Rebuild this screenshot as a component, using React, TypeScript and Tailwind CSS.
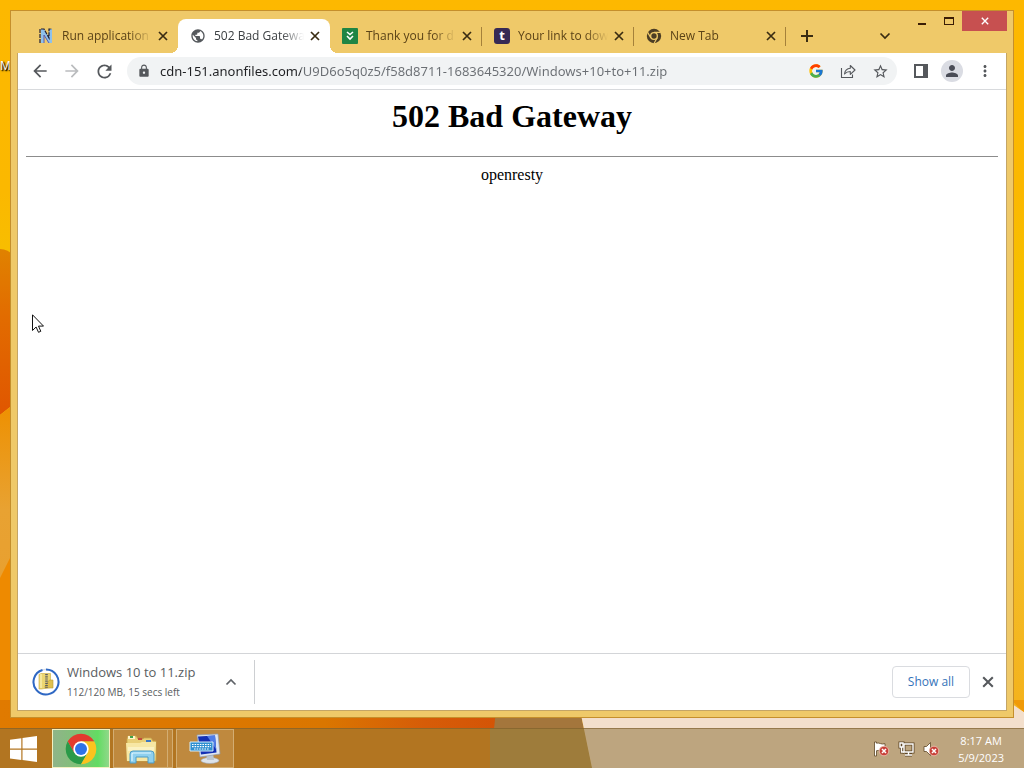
import React from "react";
import {
  MdArrowBack,
  MdArrowForward,
  MdRefresh,
  MdLock,
  MdStarBorder,
  MdPerson,
  MdMoreVert,
  MdPublic,
} from "react-icons/md";
import { FcGoogle } from "react-icons/fc";

function Wallpaper() {
  return (
    <svg
      className="absolute inset-0 h-full w-full"
      viewBox="0 0 1024 768"
      preserveAspectRatio="none"
      aria-hidden="true"
    >
      <defs>
        <linearGradient id="wpSide" x1="0" y1="0" x2="0" y2="1">
          <stop offset="0" stopColor="#fdb800" />
          <stop offset="0.25" stopColor="#fbb800" />
          <stop offset="0.42" stopColor="#f4c400" />
          <stop offset="0.6" stopColor="#f3c22c" />
          <stop offset="0.93" stopColor="#f4b21c" />
        </linearGradient>
        <linearGradient id="wpPetal" x1="0" y1="0" x2="0" y2="1">
          <stop offset="0" stopColor="#e08200" />
          <stop offset="0.4" stopColor="#e26c00" />
          <stop offset="1" stopColor="#e05600" />
        </linearGradient>
        <linearGradient id="wpLow" x1="0" y1="0" x2="0" y2="1">
          <stop offset="0" stopColor="#ee9000" />
          <stop offset="0.6" stopColor="#e8a232" />
          <stop offset="1" stopColor="#e8a030" />
        </linearGradient>
        <linearGradient id="wpBottom" x1="0" y1="0" x2="1" y2="0">
          <stop offset="0" stopColor="#e07a00" />
          <stop offset="0.65" stopColor="#da7600" />
          <stop offset="0.85" stopColor="#d65c08" />
          <stop offset="1" stopColor="#d45406" />
        </linearGradient>
      </defs>
      <rect width="1024" height="768" fill="url(#wpSide)" />
      <path d="M0 249 Q8 249 14 256 V404 L0 415Z" fill="url(#wpPetal)" />
      <path d="M0 415 L14 404 V560 L0 580Z" fill="url(#wpLow)" />
      <path d="M0 578 L14 550 V712 H0Z" fill="#ee8a00" />
      <path d="M0 700 H500 V768 H0Z" fill="url(#wpBottom)" />
      <path d="M0 728 H490 V768 H0Z" fill="#dc7e10" />
      <path d="M497 700 H578 L592 768 H490Z" fill="#a4763c" />
      <path d="M490 728 H584 L592 768 H490Z" fill="#b58c44" />
      <path d="M578 700 H1006 L1024 712 V768 H592Z" fill="#f3dfcc" />
      <path d="M1006 700 H1024 V712 Q1018 708 1012 700Z" fill="#f09a08" />
    </svg>
  );
}

function ChromeLogo({ className }: { className: string }) {
  return (
    <svg viewBox="0 0 48 48" className={className} aria-hidden="true">
      <path d="M4.1 12.5 A23 23 0 0 0 24 47 L34 29.8 L24 24 L14 29.8Z" fill="#2a9a48" />
      <path d="M43.9 12.5 A23 23 0 0 1 24 47 L34 29.8 L24 12.5Z" fill="#fcc31e" />
      <path d="M4.1 12.5 L14 29.8 L24 24 L24 12.5 H43.9 A23 23 0 0 0 4.1 12.5Z" fill="#e33b2e" />
      <circle cx="24" cy="24" r="11.5" fill="#fff" />
      <circle cx="24" cy="24" r="9" fill="#2f73e8" />
    </svg>
  );
}

function ChromeMonoIcon() {
  return (
    <svg viewBox="0 0 48 48" className="h-4 w-4" aria-hidden="true">
      <circle cx="24" cy="24" r="21.5" fill="#4c3d24" />
      <path d="M24 13H44M14.500 29.500L4.500 12.500M33.500 29.500L23.500 47" stroke="#efc969" strokeWidth="3.500" />
      <circle cx="24" cy="24" r="12" fill="#efc969" />
      <circle cx="24" cy="24" r="8" fill="#4c3d24" />
    </svg>
  );
}

function CrossIcon({ className }: { className: string }) {
  return (
    <svg viewBox="0 0 10 10" className={className} aria-hidden="true">
      <path d="M1 1l8 8M9 1L1 9" fill="none" stroke="currentColor" strokeWidth="1.7" />
    </svg>
  );
}

function NewsIcon() {
  return (
    <svg viewBox="0 0 16 16" className="h-4 w-4" aria-hidden="true">
      <path d="M3 1h3l5 8V1h3v14h-4L6 7v8H3z" fill="#8fc1ea" />
      <path d="M2 15V1h4l5 9V1h3" fill="none" stroke="#1d1d33" strokeWidth="1.2" strokeDasharray="4 1" />
      <path d="M6 7v8M6 7l5 8" fill="none" stroke="#5d5aa8" strokeWidth="1" />
    </svg>
  );
}

function AnonIcon() {
  return (
    <svg viewBox="0 0 16 16" className="h-4 w-4" aria-hidden="true">
      <rect width="16" height="16" rx="1" fill="#1f8544" />
      <path d="M5 4l3 2.5L11 4M5 8l3 3 3-3" fill="none" stroke="#fff" strokeWidth="1.6" />
    </svg>
  );
}

function LetterIcon() {
  return (
    <span className="flex h-4 w-4 items-center justify-center rounded-[3px] bg-[#372a55] pb-0.5 text-[13px] leading-none font-bold text-white">
      t
    </span>
  );
}

type TabInfo = { title: string; icon: React.ReactNode; active?: boolean; line?: boolean };

const tabs: TabInfo[] = [
  { title: "Run application", icon: <NewsIcon /> },
  { title: "502 Bad Gatewa", icon: <MdPublic className="h-4 w-4 text-[#55595d]" />, active: true },
  { title: "Thank you for d", icon: <AnonIcon />, line: true },
  { title: "Your link to dow", icon: <LetterIcon />, line: true },
  { title: "New Tab", icon: <ChromeMonoIcon />, line: true },
];

function Tab({ title, icon, active, line }: TabInfo) {
  return (
    <div
      className={
        active
          ? "relative flex h-[34px] w-[152px] min-w-0 items-center rounded-t-lg bg-white pr-2.5 pl-3 text-[#3c4043]"
          : "relative flex h-[34px] w-[152px] min-w-0 items-center pr-2.5 pl-3 text-[#5b4317]"
      }
    >
      {active && (
        <>
          <span className="absolute bottom-0 -left-2 h-2 w-2 bg-[radial-gradient(circle_at_0_0,transparent_8px,#fff_8px)]" />
          <span className="absolute -right-2 bottom-0 h-2 w-2 bg-[radial-gradient(circle_at_100%_0,transparent_8px,#fff_8px)]" />
        </>
      )}
      <button type="button" className="flex min-w-0 flex-1 items-center gap-2 text-left">
        <span className="shrink-0">{icon}</span>
        <span className="min-w-0 flex-1 overflow-hidden text-xs whitespace-nowrap [mask-image:linear-gradient(to_right,#000_75%,transparent)]">
          {title}
        </span>
      </button>
      <button type="button" aria-label={"Close " + title} className="ml-1.5 shrink-0 text-[#3a2c12]">
        <CrossIcon className="h-2.5 w-2.5" />
      </button>
      {line && <span className="absolute top-2 right-0 h-[19px] w-px bg-[#a5813a]" />}
    </div>
  );
}

function TitleBar() {
  return (
    <div className="flex h-[42px] items-end justify-between pl-[15px]">
      <div className="flex min-w-0 items-center">
        {tabs.map((t) => (
          <Tab key={t.title} {...t} />
        ))}
        <button type="button" aria-label="New tab" className="ml-3.5 text-[#3a2c12]">
          <svg viewBox="0 0 14 14" className="h-3.5 w-3.5" aria-hidden="true">
            <path d="M7 1v12M1 7h12" stroke="currentColor" strokeWidth="2" />
          </svg>
        </button>
      </div>
      <div className="flex shrink-0 self-stretch">
        <button type="button" aria-label="Search tabs" className="mt-2 mr-[17px] text-[#3a2c12]">
          <svg viewBox="0 0 12 12" className="h-3 w-3" aria-hidden="true">
            <path d="M1.5 3.5L6 8l4.5-4.5" fill="none" stroke="currentColor" strokeWidth="1.7" />
          </svg>
        </button>
        <div className="flex h-5 items-stretch pr-1.5">
          <button type="button" aria-label="Minimize" className="flex w-[27px] items-center justify-center">
            <span className="mt-1.5 h-0.5 w-2 bg-[#3b1d05]" />
          </button>
          <button type="button" aria-label="Maximize" className="flex w-[27px] items-center justify-center">
            <span className="h-2 w-2.5 border border-t-2 border-[#3b1d05]" />
          </button>
          <button type="button" aria-label="Close window" className="flex w-[45px] items-center justify-center bg-[#c75050] text-white">
            <CrossIcon className="h-2 w-2" />
          </button>
        </div>
      </div>
    </div>
  );
}

function Toolbar() {
  return (
    <div className="flex h-[37px] items-center border-b border-[#d8dadd] px-3 text-[#55585c]">
      <div className="flex items-center gap-3">
        <button type="button" aria-label="Back">
          <MdArrowBack className="h-5 w-5" />
        </button>
        <button type="button" aria-label="Forward" className="text-[#babcbe]">
          <MdArrowForward className="h-5 w-5" />
        </button>
        <button type="button" aria-label="Reload">
          <MdRefresh className="h-[21px] w-[21px]" />
        </button>
      </div>
      <div className="ml-3 flex h-7 min-w-0 flex-1 items-center rounded-full bg-[#f1f3f4] pr-2 pl-2.5">
        <MdLock className="h-3.5 w-3.5 shrink-0" />
        <input
          type="text"
          aria-label="Address"
          defaultValue="cdn-151.anonfiles.com/U9D6o5q0z5/f58d8711-1683645320/Windows+10+to+11.zip"
          className="ml-[9px] min-w-0 flex-1 bg-[linear-gradient(to_right,#202124_141px,#6a6e73_141px)] bg-clip-text pt-px font-['Noto_Sans',sans-serif] text-[13px] text-transparent outline-none"
        />
        <div className="flex items-center gap-4">
          <button type="button" aria-label="Search with Google">
            <FcGoogle className="h-4 w-4" />
          </button>
          <button type="button" aria-label="Share this page">
            <svg viewBox="0 0 16 16" className="h-4 w-4" fill="none" stroke="currentColor" strokeWidth="1.1" aria-hidden="true">
              <path d="M1.5 5v9.5h11v-3" />
              <path d="M4.5 11C5 7.5 7 5.500 10.300 5.300V2.500L15 7l-4.700 4.300V8.500C7.500 8.500 6 9.300 4.500 11z" strokeLinejoin="round" />
            </svg>
          </button>
          <button type="button" aria-label="Bookmark this tab">
            <MdStarBorder className="h-[17px] w-[17px]" />
          </button>
        </div>
      </div>
      <div className="ml-[17px] flex items-center gap-[13px]">
        <button type="button" aria-label="Side panel">
          <svg viewBox="0 0 14 14" className="h-3.5 w-3.5" aria-hidden="true">
            <path d="M1 1h12v12H1z" fill="none" stroke="currentColor" strokeWidth="2" />
            <path d="M9 1h4v12H9z" fill="currentColor" />
          </svg>
        </button>
        <button type="button" aria-label="Profile" className="flex h-[22px] w-[22px] items-center justify-center rounded-full bg-[#dadce3] text-[#4a4d57]">
          <MdPerson className="h-[18px] w-[18px]" />
        </button>
        <button type="button" aria-label="Menu">
          <MdMoreVert className="h-[18px] w-[18px]" />
        </button>
      </div>
    </div>
  );
}

function ZipProgress() {
  return (
    <svg viewBox="0 0 28 28" className="h-7 w-7" aria-hidden="true">
      <circle cx="14" cy="14" r="12.5" fill="none" stroke="#d8dfec" strokeWidth="1.6" />
      <path d="M14 1.5A12.5 12.5 0 1 1 10.5 2" fill="none" stroke="#2f68c4" strokeWidth="2" />
      <path d="M7 6.5l2-1h9.5v14l-9 1.5H7z" fill="#ecd672" stroke="#c9a93c" strokeWidth=".6" />
      <path d="M17.500 12h3.500v8h-8v-2z" fill="#e0c04e" stroke="#b99a35" strokeWidth=".6" />
      <path d="M14.500 6v14" stroke="#5b5d63" strokeWidth="2.6" strokeDasharray="1.2 1" />
      <path d="M9 6v14" stroke="#f8edac" strokeWidth="1.5" />
    </svg>
  );
}

function DownloadBar() {
  return (
    <div className="flex h-[57px] items-center border-t border-[#d3d5d8] pl-3.5">
      <div className="flex h-11 w-[223px] items-center border-r border-[#cdcfd2]">
        <ZipProgress />
        <div className="ml-[7px] flex-1 text-[#5a5d61]">
          <div className="text-[13px] leading-5">Windows 10 to 11.zip</div>
          <div className="text-[10px] leading-5">112/120 MB, 15 secs left</div>
        </div>
        <button type="button" aria-label="Download options" className="mr-[17px] text-[#5f6368]">
          <svg viewBox="0 0 12 12" className="h-3 w-3" aria-hidden="true">
            <path d="M1.5 8.5L6 4l4.5 4.5" fill="none" stroke="currentColor" strokeWidth="1.7" />
          </svg>
        </button>
      </div>
      <button
        type="button"
        className="ml-auto h-8 w-[78px] rounded border border-[#dadce0] text-xs font-medium text-[#3573b9]"
      >
        Show all
      </button>
      <button type="button" aria-label="Close downloads bar" className="mr-3 ml-3 text-[#55585c]">
        <CrossIcon className="h-3 w-3" />
      </button>
    </div>
  );
}

function BrowserWindow() {
  return (
    <div className="relative flex flex-1 flex-col border border-[#c58f2c] bg-[#efc969]">
      <TitleBar />
      <div className="mx-1.5 mb-1.5 flex flex-1 flex-col border border-t-0 border-[#c4a566] bg-white">
        <Toolbar />
        <main className="flex-1 p-2 text-center font-['Liberation_Serif',serif] text-black">
          <h1 className="text-[32px] leading-[37px] font-bold">502 Bad Gateway</h1>
          <hr className="mt-[21px] mb-2 border-t-0 border-b border-[#8c8c8c]" />
          <p className="text-base leading-[20px]">openresty</p>
        </main>
        <DownloadBar />
      </div>
    </div>
  );
}

function ExplorerIcon() {
  return (
    <svg viewBox="0 0 34 30" className="h-[30px] w-[34px]" aria-hidden="true">
      <path d="M3 5l1-3h8l2 3h5l1-1h7l2 3h3v20H3z" fill="#e9cf77" stroke="#c7a44c" strokeWidth=".8" />
      <path d="M4 2h7v3H4z" fill="#fff4c8" />
      <path d="M6 2h3v2H6z" fill="#3ea34a" />
      <path d="M14 4h4v2h-4z" fill="#c24a3c" />
      <path d="M22 6h5v2h-5z" fill="#3b78c4" />
      <path d="M2 9h14l2-1h14l-1 19H3z" fill="#f7e7a4" />
      <path d="M4 13h26v4H4z" fill="#fbf2c2" />
      <path d="M6 29V20q0-3 3-3h18q3 0 3 3v9h-6v-6H12v6z" fill="#8fd0ee" stroke="#4b9cc6" strokeWidth="1" />
      <path d="M8 27v-7q0-1 1-1h18" fill="none" stroke="#dff5ff" strokeWidth="1.2" />
    </svg>
  );
}

function ComputerIcon() {
  return (
    <svg viewBox="0 0 32 32" className="h-8 w-8" aria-hidden="true">
      <ellipse cx="21" cy="27.5" rx="9" ry="3" fill="#dde3ea" stroke="#9aa5b3" strokeWidth=".6" />
      <path d="M17 20h7l1 7h-7z" fill="#bcc6d1" />
      <path d="M8 2l21-1 2 20-20 3z" fill="#dfe6f0" stroke="#8c9bb0" strokeWidth=".7" />
      <path d="M9 3.5l17-1 1.5 17-15.500 2z" fill="#1330b4" />
      <path d="M18 3l8-.5 1.2 14z" fill="#4f7ce6" />
      <path d="M1 9h23v9H1z" fill="#2f8fd0" stroke="#d5ecfa" strokeWidth="1" />
      <path d="M3 11.500h19M3 13.700h19M5 16h15" stroke="#fff" strokeWidth="1.2" strokeDasharray="1.6 1" />
    </svg>
  );
}

function RedCross({ x, y }: { x: number; y: number }) {
  return (
    <g>
      <circle cx={x} cy={y} r="4.8" fill="#c8423a" stroke="#f0c4b4" strokeWidth=".8" />
      <path d={`M${x - 2} ${y - 2}l4 4M${x + 2} ${y - 2}l-4 4`} stroke="#fff" strokeWidth="1.5" />
    </g>
  );
}

function Tray() {
  return (
    <div className="flex items-center gap-2">
      <svg viewBox="0 0 17 16" className="h-4 w-[17px]" role="img" aria-label="Action Center">
        <path d="M1.5 1h2v1.200c3-1 4.500 1.800 8.500.5v7c-4 1.200-5.500-1-8.500 0V15h-2z" fill="#fff" stroke="#5e4626" strokeWidth=".8" />
        <RedCross x={11} y={10} />
      </svg>
      <svg viewBox="0 0 17 16" className="h-4 w-[17px]" role="img" aria-label="Network">
        <g fill="none" stroke="#5e4626" strokeWidth="3">
          <path d="M6 3h9v8H6zM7 14h7M10.500 11v3" />
          <path d="M2 2h3v4H2zM3.500 6v5H6" />
        </g>
        <g fill="none" stroke="#fff" strokeWidth="1.4">
          <path d="M6 3h9v8H6zM7 14h7M10.500 11v3" />
          <path d="M2 2h3v4H2zM3.500 6v5H6" />
        </g>
      </svg>
      <svg viewBox="0 0 17 16" className="h-4 w-[17px]" role="img" aria-label="Volume muted">
        <path d="M1 5.500h2.500L7.500 1.500v13L3.500 10.500H1z" fill="#fff" stroke="#5e4626" strokeWidth=".8" />
        <RedCross x={11} y={10} />
      </svg>
    </div>
  );
}

function Taskbar() {
  return (
    <div className="relative flex h-10 items-center border-t border-[#7c5c2a]/60 bg-[#876c32]/50 pr-5">
      <button type="button" aria-label="Start" className="flex w-[52px] justify-center pr-1">
        <svg viewBox="0 0 28 26" className="h-[26px] w-7" fill="#fff" aria-hidden="true">
          <path d="M0 3.800l11.300-1.600v10.300H0zM12.500 2L27 0v12.500H12.500zM0 13.700h11.300V24L0 22.400zM12.500 13.700H27V26l-14.500-2z" />
        </svg>
      </button>
      <button
        type="button"
        aria-label="Google Chrome"
        className="flex h-[39px] w-[58px] items-center justify-center border border-[#f3f0c0] bg-[linear-gradient(to_right,#8fb489,#7ec374_50%,#62dc62_80%,#90d88a)]"
      >
        <ChromeLogo className="h-8 w-8" />
      </button>
      <button
        type="button"
        aria-label="File Explorer"
        className="ml-[3px] flex h-[39px] w-[60px] border border-[#d3ad72] bg-[#cc9d5c]/50"
      >
        <span className="flex h-full w-[54px] items-center justify-center border-r border-[#d3ad72]">
          <ExplorerIcon />
        </span>
      </button>
      <button
        type="button"
        aria-label="Remote Desktop"
        className="ml-[3px] flex h-[39px] w-[58px] items-center justify-center border border-[#d3ad72] bg-[#cc9d5c]/50"
      >
        <ComputerIcon />
      </button>
      <div className="ml-auto flex items-center gap-[18px]">
        <Tray />
        <div className="text-center text-[11px] leading-[17px] text-white">
          <div>8:17 AM</div>
          <div>5/9/2023</div>
        </div>
      </div>
    </div>
  );
}

export default function App() {
  return (
    <div className="relative flex min-h-screen flex-col overflow-hidden font-['Open_Sans','Noto_Sans',sans-serif]">
      <Wallpaper />
      <span className="absolute top-[58px] left-0 text-xs text-white [text-shadow:1px_1px_1px_#000,1px_1px_2px_#000]">
        M
      </span>
      <div className="flex flex-1 flex-col pt-2.5 pr-2.5 pb-2.5 pl-2.5">
        <BrowserWindow />
      </div>
      <Taskbar />
      <svg viewBox="0 0 12 19" className="absolute top-[314px] left-8 h-[19px] w-3" aria-hidden="true">
        <path
          d="M.5.8v15.700l3.600-3.500 2.400 5.300 2.300-1-2.300-5.200h5z"
          fill="#fff"
          stroke="#111"
          strokeWidth="1"
        />
      </svg>
    </div>
  );
}
